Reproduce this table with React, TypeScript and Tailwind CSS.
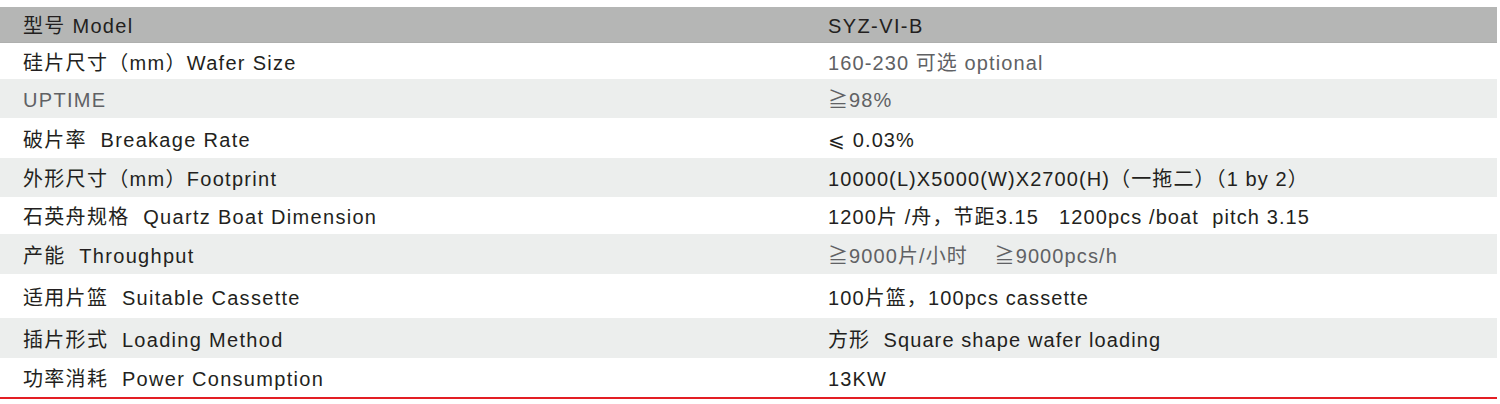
const rows = [
  { label: "硅片尺寸（mm）Wafer Size", value: "160-230 可选 optional", h: "h-[36px]", bg: false, labelMuted: false, valueMuted: true },
  { label: "UPTIME", value: "≧98%", h: "h-[39px]", bg: true, labelMuted: true, valueMuted: true },
  { label: "破片率  Breakage Rate", value: "⩽ 0.03%", h: "h-[40px]", bg: false, labelMuted: false, valueMuted: false },
  { label: "外形尺寸（mm）Footprint", value: "10000(L)X5000(W)X2700(H)（一拖二）（1 by 2）", h: "h-[39px]", bg: true, labelMuted: false, valueMuted: false },
  { label: "石英舟规格  Quartz Boat Dimension", value: "1200片 /舟，节距3.15   1200pcs /boat  pitch 3.15", h: "h-[37px]", bg: false, labelMuted: false, valueMuted: false },
  { label: "产能  Throughput", value: "≧9000片/小时    ≧9000pcs/h", h: "h-[40px]", bg: true, labelMuted: false, valueMuted: true },
  { label: "适用片篮  Suitable Cassette", value: "100片篮，100pcs cassette", h: "h-[44px]", bg: false, labelMuted: false, valueMuted: false },
  { label: "插片形式  Loading Method", value: "方形  Square shape wafer loading", h: "h-[40px]", bg: true, labelMuted: false, valueMuted: false },
  { label: "功率消耗  Power Consumption", value: "13KW", h: "h-[39px]", bg: false, labelMuted: false, valueMuted: false },
];

export default function App() {
  return (
    <div
      className="w-[1500px] h-[404px] bg-white pt-[7px] text-[20px] text-[#231f20]"
      style={{ fontFamily: '"Liberation Sans", "Noto Sans CJK SC", sans-serif' }}
    >
      <div className="w-[1497px]">
        <div className="grid grid-cols-[805px_1fr] h-[36px] items-center pt-[3px] bg-[#b5b6b5] border-b border-[#aeafae]">
          <span className="pl-[23px] whitespace-pre tracking-[1.3px]">型号 Model</span>
          <span className="pl-[23px] tracking-[1.4px]">SYZ-VI-B</span>
        </div>
        {rows.map((r) => (
          <div
            key={r.label}
            className={`grid grid-cols-[805px_1fr] items-center pt-[3px] ${r.h} ${r.bg ? "bg-[#eceeed]" : "bg-white"}`}
          >
            <span className={`pl-[23px] whitespace-pre tracking-[1.3px] ${r.labelMuted ? "text-[#606164]" : ""}`}>{r.label}</span>
            <span className={`pl-[23px] whitespace-pre tracking-[1.1px] ${r.valueMuted ? "text-[#606164]" : ""}`}>{r.value}</span>
          </div>
        ))}
        <div className="h-[2px] bg-[#e31e24]" />
      </div>
    </div>
  );
}
